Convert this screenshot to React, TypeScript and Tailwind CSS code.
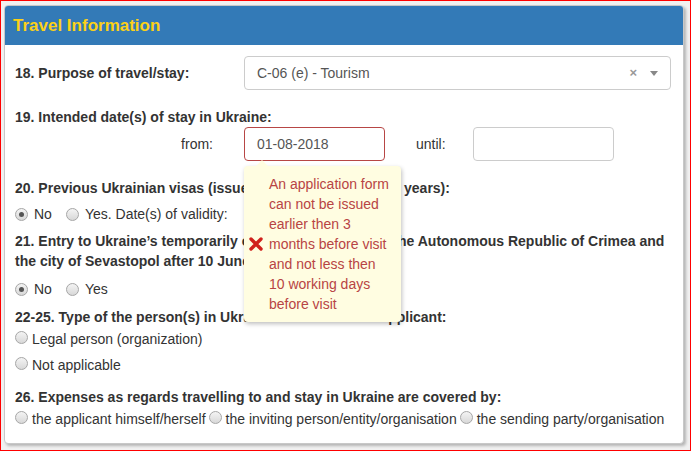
import React from "react";

const Radio: React.FC<{ checked?: boolean; className?: string }> = ({ checked, className }) => (
  <span
    className={
      "inline-flex items-center justify-center w-[13px] h-[13px] rounded-full border border-[#a6a6a6] bg-gradient-to-b from-[#f4f4f4] to-[#d8d8d8] shrink-0 " +
      (className ?? "")
    }
  >
    {checked && <span className="w-[5px] h-[5px] rounded-full bg-[#555]" />}
  </span>
);

const Label: React.FC<{ children: React.ReactNode; className?: string }> = ({ children, className }) => (
  <div className={"font-bold text-[14px] leading-[20px] text-[#333] " + (className ?? "")}>{children}</div>
);

const App: React.FC = () => {
  return (
    <div
      className="w-[691px] h-[451px] border border-[#ff0000] bg-[#f1f1f1] pt-[4px] pl-[3px] overflow-hidden relative"
      style={{ fontFamily: '"Liberation Sans", Arial, sans-serif' }}
    >
      <div className="w-[680px] h-[439px] bg-white border border-[#c8c8c8] rounded-[4px] shadow-[2px_2px_3px_rgba(0,0,0,0.25)] overflow-hidden">
        <div className="h-[39px] bg-[#337ab7] flex items-center pl-[8px] pt-[1px]">
          <span className="font-bold text-[17px] text-[#fcd116]">Travel Information</span>
        </div>

        <div className="pl-[10px] pr-[10px] pt-[11px] text-[14px] text-[#333]">
          {/* 18 */}
          <div className="flex items-center h-[34px]">
            <Label className="w-[229px]">18. Purpose of travel/stay:</Label>
            <div className="w-[427px] h-[34px] border border-[#cccccc] rounded-[4px] flex items-center pl-[12px] pr-[12px] text-[#555]">
              <span className="flex-1">C-06 (e) - Tourism</span>
              <span className="text-[#999] font-bold text-[13px] mr-[13px]">×</span>
              <span className="w-0 h-0 border-l-[4px] border-r-[4px] border-t-[5px] border-l-transparent border-r-transparent border-t-[#888]" />
            </div>
          </div>

          {/* 19 */}
          <Label className="mt-[17px]">19. Intended date(s) of stay in Ukraine:</Label>
          <div className="flex items-center h-[34px] text-[#333]">
            <span className="w-[198px] text-right">from:</span>
            <div className="ml-[31px] w-[141px] h-[34px] border border-[#b74645] rounded-[4px] flex items-center pl-[12px] text-[#555]">
              01-08-2018
            </div>
            <span className="ml-[31px] w-[57px]">until:</span>
            <div className="w-[141px] h-[34px] border border-[#cccccc] rounded-[4px]" />
          </div>

          {/* 20 */}
          <Label className="mt-[17px]">20. Previous Ukrainian visas (issued during the past three years):</Label>
          <div className="flex items-center h-[20px] mt-[6px]">
            <Radio checked />
            <span className="ml-[6px]">No</span>
            <Radio className="ml-[14px]" />
            <span className="ml-[6px]">Yes. Date(s) of validity:</span>
          </div>

          {/* 21 */}
          <Label className="mt-[7px] w-[656px]">
            21. Entry to Ukraine’s temporarily occupied territories of the Autonomous Republic of Crimea and the city
            of Sevastopol after 10 June 2014:
          </Label>
          <div className="flex items-center h-[20px] mt-[8px]">
            <Radio checked />
            <span className="ml-[6px]">No</span>
            <Radio className="ml-[14px]" />
            <span className="ml-[6px]">Yes</span>
          </div>

          {/* 22-25 */}
          <Label className="mt-[8px]">22-25. Type of the person(s) in Ukraine who invites the applicant:</Label>
          <div className="flex items-center h-[20px] mt-[2px]">
            <Radio className="-mt-[4px]" />
            <span className="ml-[4px]">Legal person (organization)</span>
          </div>
          <div className="flex items-center h-[20px] mt-[6px]">
            <Radio className="-mt-[4px]" />
            <span className="ml-[4px]">Not applicable</span>
          </div>

          {/* 26 */}
          <Label className="mt-[12px]">26. Expenses as regards travelling to and stay in Ukraine are covered by:</Label>
          <div className="flex items-center h-[20px] mt-[2px] whitespace-nowrap">
            <Radio className="-mt-[4px]" />
            <span className="ml-[4px]">the applicant himself/herself</span>
            <Radio className="-mt-[4px] ml-[3px]" />
            <span className="ml-[4px]">the inviting person/entity/organisation</span>
            <Radio className="-mt-[4px] ml-[3px]" />
            <span className="ml-[4px]">the sending party/organisation</span>
          </div>
        </div>
      </div>

      {/* validation tooltip */}
      <div className="absolute left-[243px] top-[165px] w-[157px] h-[156px] bg-[#fffde1] rounded-[4px] shadow-[1px_2px_4px_rgba(0,0,0,0.25)] flex items-center">
        <span className="absolute -top-[6px] left-[12px] w-0 h-0 border-l-[6px] border-r-[6px] border-b-[6px] border-l-transparent border-r-transparent border-b-[#fffde1]" />
        <svg width="14" height="14" viewBox="0 0 14 14" className="ml-[5px] shrink-0">
          <path d="M2 2 L12 12 M12 2 L2 12" stroke="#d0211c" strokeWidth="3.4" strokeLinecap="round" />
        </svg>
        <div className="ml-[6px] w-[122px] text-[14px] leading-[20px] text-[#b84444]">
          An application form can not be issued earlier then 3 months before visit and not less then 10 working days
          before visit
        </div>
      </div>
    </div>
  );
};

export default App;
